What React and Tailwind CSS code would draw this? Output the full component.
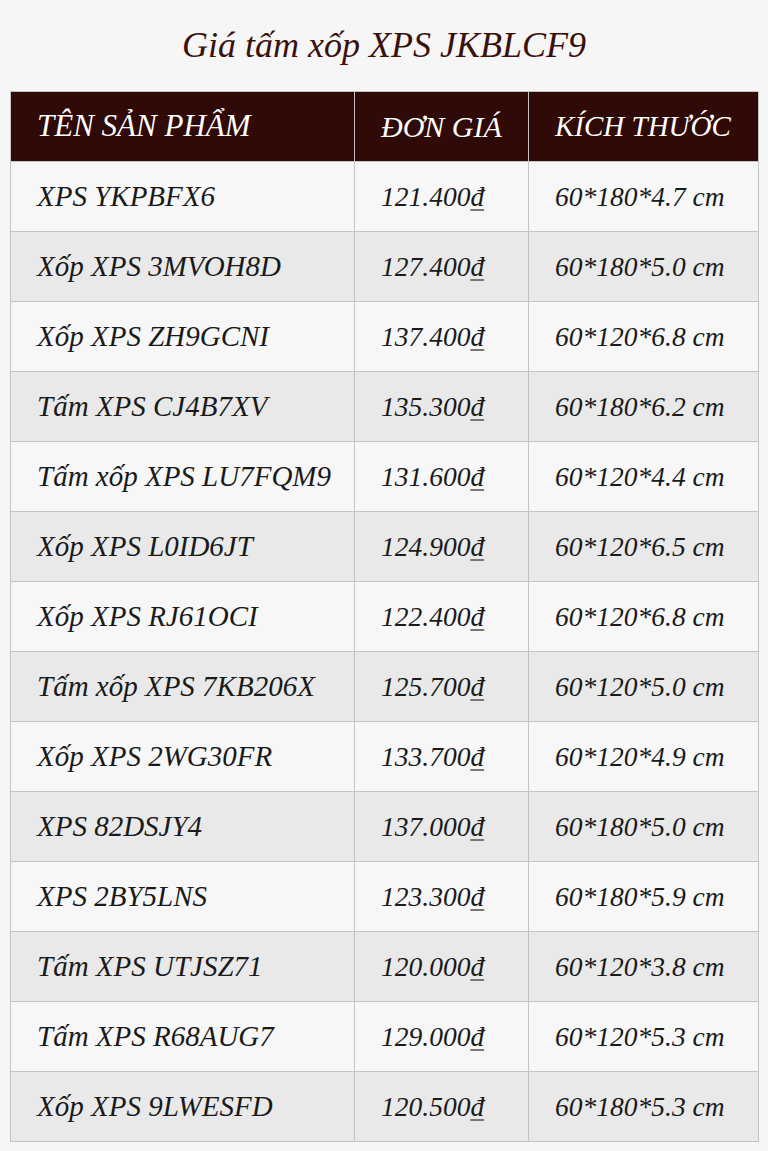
const rows = [
  ["XPS YKPBFX6", "121.400", "60*180*4.7 cm"],
  ["Xốp XPS 3MVOH8D", "127.400", "60*180*5.0 cm"],
  ["Xốp XPS ZH9GCNI", "137.400", "60*120*6.8 cm"],
  ["Tấm XPS CJ4B7XV", "135.300", "60*180*6.2 cm"],
  ["Tấm xốp XPS LU7FQM9", "131.600", "60*120*4.4 cm"],
  ["Xốp XPS L0ID6JT", "124.900", "60*120*6.5 cm"],
  ["Xốp XPS RJ61OCI", "122.400", "60*120*6.8 cm"],
  ["Tấm xốp XPS 7KB206X", "125.700", "60*120*5.0 cm"],
  ["Xốp XPS 2WG30FR", "133.700", "60*120*4.9 cm"],
  ["XPS 82DSJY4", "137.000", "60*180*5.0 cm"],
  ["XPS 2BY5LNS", "123.300", "60*180*5.9 cm"],
  ["Tấm XPS UTJSZ71", "120.000", "60*120*3.8 cm"],
  ["Tấm XPS R68AUG7", "129.000", "60*120*5.3 cm"],
  ["Xốp XPS 9LWESFD", "120.500", "60*180*5.3 cm"],
];

export default function App() {
  return (
    <div
      className="min-h-[1151px] bg-[#f6f6f6] pt-[22px] italic"
      style={{ fontFamily: '"Liberation Serif", "DejaVu Serif", serif' }}
    >
      <h1 className="text-center text-[36px] leading-[46px] text-[#3a100b] mb-[23px]">
        Giá tấm xốp XPS JKBLCF9
      </h1>
      <table className="ml-[10px] w-[748px] border-collapse text-[29px] text-[#1a1a1a] table-fixed">
        <colgroup>
          <col className="w-[344px]" />
          <col className="w-[174px]" />
          <col className="w-[230px]" />
        </colgroup>
        <thead>
          <tr className="bg-[#2f0a06] text-white h-[70px]">
            <th className="border border-[#c4c4c4] px-[26px] text-left font-normal whitespace-nowrap text-[31px]">TÊN SẢN PHẨM</th>
            <th className="border border-[#c4c4c4] px-[26px] text-left font-normal whitespace-nowrap text-[30px]">ĐƠN GIÁ</th>
            <th className="border border-[#c4c4c4] px-[26px] text-left font-normal whitespace-nowrap text-[29px]">KÍCH THƯỚC</th>
          </tr>
        </thead>
        <tbody>
          {rows.map((r, i) => (
            <tr key={i} className={`h-[70px] ${i % 2 ? "bg-[#e9e9e9]" : "bg-[#f7f7f7]"}`}>
              <td className="border border-[#c4c4c4] px-[26px] whitespace-nowrap">{r[0]}</td>
              <td className="border border-[#c4c4c4] px-[26px] whitespace-nowrap text-[27.5px]">
                {r[1]}
                <span className="underline underline-offset-[3px] decoration-[#777]">đ</span>
              </td>
              <td className="border border-[#c4c4c4] px-[26px] whitespace-nowrap text-[27.5px]">{r[2]}</td>
            </tr>
          ))}
        </tbody>
      </table>
    </div>
  );
}
